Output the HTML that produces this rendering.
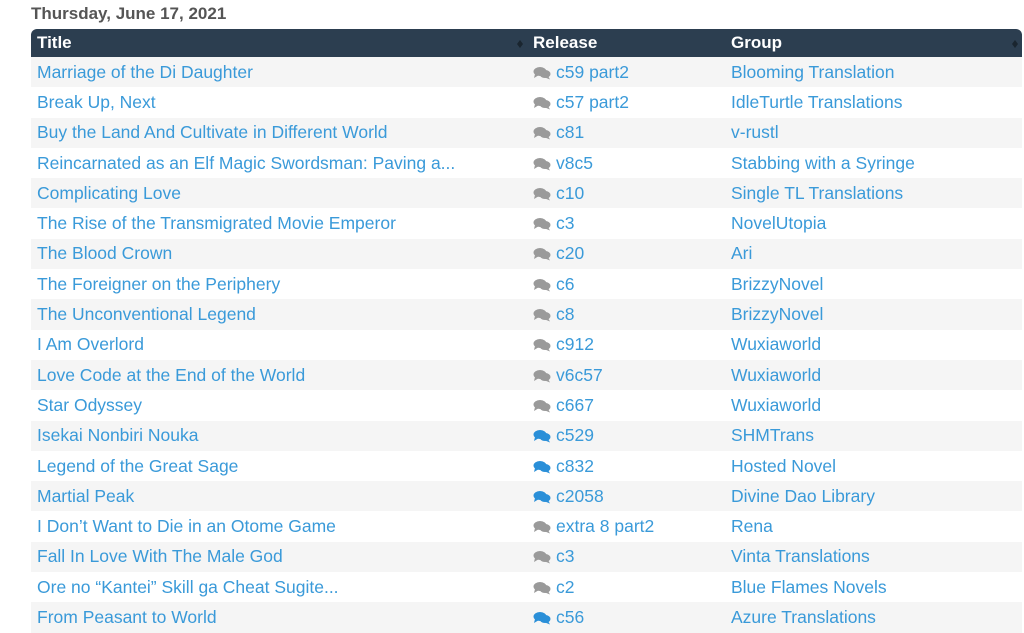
<!DOCTYPE html>
<html><head><meta charset="utf-8"><style>
body{margin:0;background:#fff;font-family:"Liberation Sans","DejaVu Sans",sans-serif;width:1024px;height:615px;overflow:hidden;position:relative}
.date{position:absolute;left:31px;top:4px;font-size:17px;font-weight:bold;color:#555}
table{position:absolute;left:31px;top:29px;width:991px;border-collapse:collapse;font-size:17.5px;table-layout:fixed}
th{background:#2c3e50;color:#fff;text-align:left;height:28px;padding:0 0 0 6px;font-weight:bold;position:relative;font-size:17px}
th:first-child{border-top-left-radius:6px}th:last-child{border-top-right-radius:6px}
td{height:30.3px;padding:0 0 0 6px;color:#3a9ad9;white-space:nowrap;overflow:hidden}
tr:nth-child(odd) td{background:#f5f5f5}
.s{position:absolute;right:4px;top:10px;width:0}
.s:before{content:"";position:absolute;border:3px solid transparent;border-bottom:4px solid #1a252f;top:-2px;left:-6px}
.s:after{content:"";position:absolute;border:3px solid transparent;border-top:4px solid #1a252f;top:5px;left:-6px}
svg{vertical-align:-2px;margin-right:5px}
</style></head><body>
<div class="date">Thursday, June 17, 2021</div>
<table>
<colgroup><col style="width:496px"><col style="width:198px"><col></colgroup>
<tr><th>Title<span class="s"></span></th><th>Release</th><th>Group<span class="s"></span></th></tr>
<tbody id="b"></tbody>
</table>
<script>
var d=[["Marriage of the Di Daughter","c59 part2","Blooming Translation",0],["Break Up, Next","c57 part2","IdleTurtle Translations",0],["Buy the Land And Cultivate in Different World","c81","v-rustl",0],["Reincarnated as an Elf Magic Swordsman: Paving a...","v8c5","Stabbing with a Syringe",0],["Complicating Love","c10","Single TL Translations",0],["The Rise of the Transmigrated Movie Emperor","c3","NovelUtopia",0],["The Blood Crown","c20","Ari",0],["The Foreigner on the Periphery","c6","BrizzyNovel",0],["The Unconventional Legend","c8","BrizzyNovel",0],["I Am Overlord","c912","Wuxiaworld",0],["Love Code at the End of the World","v6c57","Wuxiaworld",0],["Star Odyssey","c667","Wuxiaworld",0],["Isekai Nonbiri Nouka","c529","SHMTrans",1],["Legend of the Great Sage","c832","Hosted Novel",1],["Martial Peak","c2058","Divine Dao Library",1],["I Don\u2019t Want to Die in an Otome Game","extra 8 part2","Rena",0],["Fall In Love With The Male God","c3","Vinta Translations",0],["Ore no \u201cKantei\u201d Skill ga Cheat Sugite...","c2","Blue Flames Novels",0],["From Peasant to World","c56","Azure Translations",1]];
var h="";d.forEach(function(r){var c=r[3]?"#2a8fd8":"#9a9a9a";
h+='<tr><td>'+r[0]+'</td><td><svg width="18" height="14" viewBox="0 0 18 14"><ellipse cx="7" cy="5.5" rx="6.5" ry="4.5" fill="'+c+'"/><path d="M2 8 L1 12 L6 9Z" fill="'+c+'"/><ellipse cx="12" cy="8" rx="5.5" ry="4" fill="'+c+'"/><path d="M15 10 L17 13.5 L12 11.5Z" fill="'+c+'"/></svg>'+r[1]+'</td><td>'+r[2]+'</td></tr>';});
document.getElementById("b").innerHTML=h;
</script>
</body></html>
